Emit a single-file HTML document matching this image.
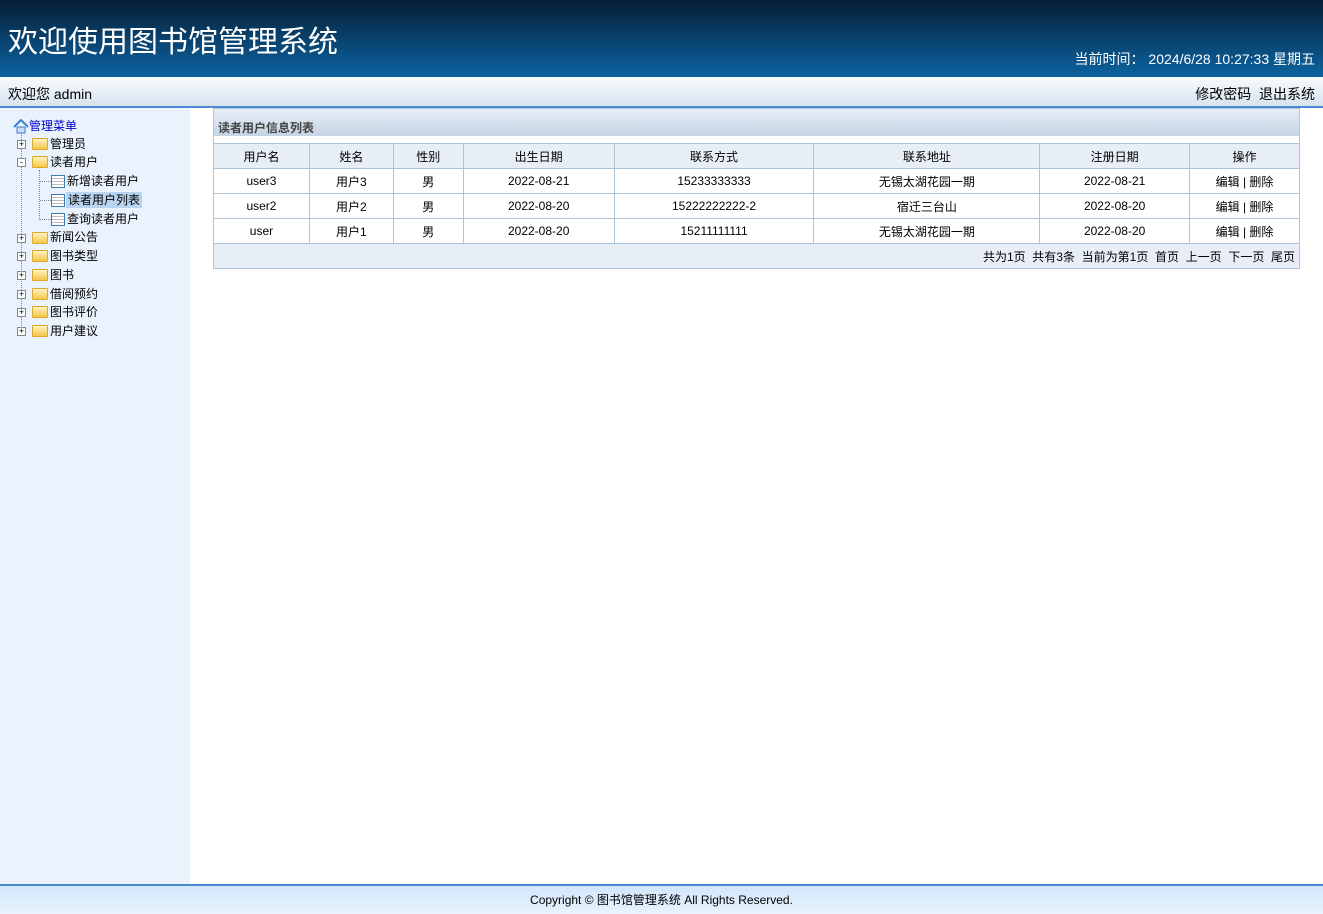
<!DOCTYPE html>
<html><head><meta charset="utf-8"><style>
*{margin:0;padding:0;box-sizing:border-box}
body{width:1323px;height:914px;position:relative;overflow:hidden;background:#fff;font-family:"Liberation Sans","Noto Sans CJK SC",sans-serif;font-size:12px;color:#000}
#hd{position:absolute;left:0;top:0;width:1323px;height:77px;background:linear-gradient(#061e33,#0a4878 60%,#0c639f);}
#hd h1{position:absolute;left:8px;top:17px;font-size:30px;font-weight:normal;color:#fff;letter-spacing:0px}
#hd .t{position:absolute;right:8px;top:49px;color:#fff;font-size:14px}
#bar{position:absolute;left:0;top:77px;width:1323px;height:31px;background:linear-gradient(#f8fbfe,#d7e3ef);border-bottom:2px solid #4a8ad0;font-size:14px}
#bar .l{position:absolute;left:8px;top:7px}
#bar .r{position:absolute;right:8px;top:7px}
#sd{position:absolute;left:0;top:108px;width:190px;height:776px;background:#eaf3fd}
.n{position:absolute;height:16px;line-height:16px;font-size:12px;white-space:nowrap}
.pm{position:absolute;width:9px;height:9px;border:1px solid #888;background:#fff;font-size:9px;line-height:7px;text-align:center}
.fd{position:absolute;width:16px;height:12px;background:linear-gradient(#fff3c0,#f5c847);border:1px solid #d9a830;border-radius:1px}
.pg{position:absolute;width:14px;height:13px;border:1px solid #3d7fb5;background:repeating-linear-gradient(#fff 0 2px,#bbb 2px 3px);}
.vl{position:absolute;border-left:1px dotted #888}
.hl{position:absolute;border-top:1px dotted #888}
#ft{position:absolute;left:0;top:884px;width:1323px;height:30px;border-top:2px solid #4a8ad0;background:linear-gradient(#d1e6fb,#e9f3fd);text-align:center;line-height:28px}
#box{position:absolute;left:213px;top:108px;width:1087px;height:161px;border:1px solid #aec4d9}
#box .tt{height:27px;background:linear-gradient(#e8eef6,#c5d4e6);font-weight:bold;color:#444;padding:10px 0 0 4px;font-size:12px}
table{position:absolute;left:-1px;top:34px;border-collapse:collapse;width:1087px}
td{border:1px solid #aec4d9;height:25px;text-align:center;font-size:12px}
tr.h td{background:#e8eef6}
tr.f td{background:#e8eef6;text-align:right;padding-right:4px}
</style></head><body>
<div id="hd"><h1>欢迎使用图书馆管理系统</h1><div class="t">当前时间：&nbsp;2024/6/28 10:27:33 星期五</div></div>
<div id="bar"><span class="l">欢迎您 admin</span><span class="r">修改密码 &nbsp;退出系统</span></div>
<div id="sd">
<div class="vl" style="left:21px;top:24px;height:200px"></div>
<div class="vl" style="left:39px;top:62px;height:50px"></div>
<svg style="position:absolute;left:13px;top:11px" width="16" height="15"><path d="M1 8 L8 1 L15 8" stroke="#3a7fd0" stroke-width="2" fill="none"/><rect x="4" y="8" width="8" height="6" fill="#cde" stroke="#3a7fd0"/></svg>
<div class="n" style="left:29px;top:10px;color:#0000cc">管理菜单</div>
<div class="pm" style="left:17px;top:32px">+</div><div class="fd" style="left:32px;top:30px"></div><div class="n" style="left:50px;top:28px">管理员</div>
<div class="pm" style="left:17px;top:50px">-</div><div class="fd" style="left:32px;top:48px"></div><div class="n" style="left:50px;top:46px">读者用户</div>
<div class="hl" style="left:40px;top:73px;width:11px"></div><div class="pg" style="left:51px;top:67px"></div><div class="n" style="left:67px;top:65px">新增读者用户</div>
<div class="hl" style="left:40px;top:92px;width:11px"></div><div class="pg" style="left:51px;top:86px"></div><div class="n" style="left:66px;top:84px;background:#b9d4f0;padding:0 2px">读者用户列表</div>
<div class="hl" style="left:40px;top:111px;width:11px"></div><div class="pg" style="left:51px;top:105px"></div><div class="n" style="left:67px;top:103px">查询读者用户</div>
<div class="pm" style="left:17px;top:126px">+</div><div class="fd" style="left:32px;top:124px"></div><div class="n" style="left:50px;top:121px">新闻公告</div>
<div class="pm" style="left:17px;top:144px">+</div><div class="fd" style="left:32px;top:142px"></div><div class="n" style="left:50px;top:140px">图书类型</div>
<div class="pm" style="left:17px;top:163px">+</div><div class="fd" style="left:32px;top:161px"></div><div class="n" style="left:50px;top:159px">图书</div>
<div class="pm" style="left:17px;top:182px">+</div><div class="fd" style="left:32px;top:180px"></div><div class="n" style="left:50px;top:178px">借阅预约</div>
<div class="pm" style="left:17px;top:200px">+</div><div class="fd" style="left:32px;top:198px"></div><div class="n" style="left:50px;top:196px">图书评价</div>
<div class="pm" style="left:17px;top:219px">+</div><div class="fd" style="left:32px;top:217px"></div><div class="n" style="left:50px;top:215px">用户建议</div>
</div>
<div id="box"><div class="tt">读者用户信息列表</div>
<table>
<colgroup><col style="width:96px"><col style="width:84px"><col style="width:70px"><col style="width:151px"><col style="width:200px"><col style="width:226px"><col style="width:150px"><col style="width:110px"></colgroup>
<tr class="h"><td>用户名</td><td>姓名</td><td>性别</td><td>出生日期</td><td>联系方式</td><td>联系地址</td><td>注册日期</td><td>操作</td></tr>
<tr><td>user3</td><td>用户3</td><td>男</td><td>2022-08-21</td><td>15233333333</td><td>无锡太湖花园一期</td><td>2022-08-21</td><td>编辑 | 删除</td></tr>
<tr><td>user2</td><td>用户2</td><td>男</td><td>2022-08-20</td><td>15222222222-2</td><td>宿迁三台山</td><td>2022-08-20</td><td>编辑 | 删除</td></tr>
<tr><td>user</td><td>用户1</td><td>男</td><td>2022-08-20</td><td>15211111111</td><td>无锡太湖花园一期</td><td>2022-08-20</td><td>编辑 | 删除</td></tr>
<tr class="f"><td colspan="8">共为1页 &nbsp;共有3条 &nbsp;当前为第1页 &nbsp;首页 &nbsp;上一页 &nbsp;下一页 &nbsp;尾页</td></tr>
</table></div>
<div id="ft">Copyright © 图书馆管理系统 All Rights Reserved.</div>
</body></html>
